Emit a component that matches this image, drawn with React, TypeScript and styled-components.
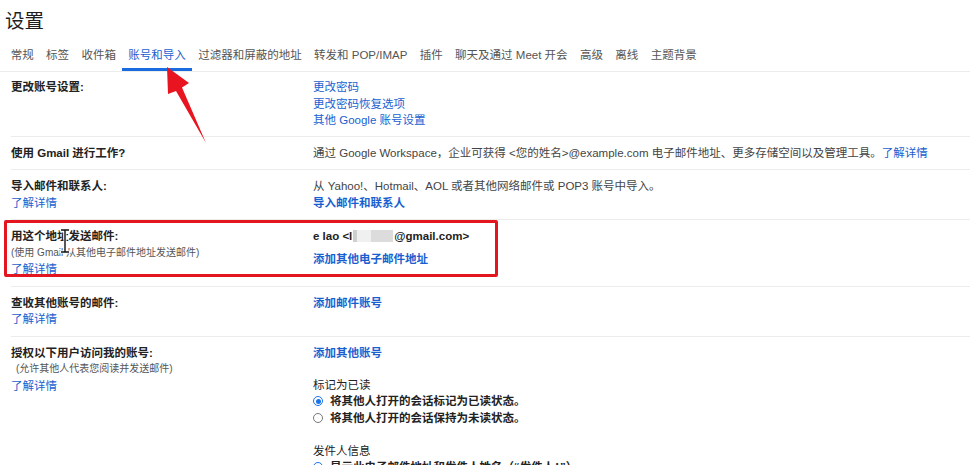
import React from "react";
import styled, { createGlobalStyle } from "styled-components";

const Global = createGlobalStyle`
  html, body { margin: 0; padding: 0; background: #fff; }
  body {
    font-family: "Liberation Sans", "Noto Sans CJK SC", sans-serif;
    overflow: hidden;
  }
`;

const Page = styled.div`
  position: relative;
  width: 970px;
  height: 465px;
  overflow: hidden;
  background: #fff;
`;

const Title = styled.h1`
  margin: 0;
  padding: 8px 0 0 5px;
  font-size: 19.5px;
  line-height: 26px;
  font-weight: 400;
  color: #1f1f1f;
`;

const TabBar = styled.nav`
  display: flex;
  padding-left: 4.5px;
  border-bottom: 1px solid #ececec;
`;

const Tab = styled.div<{ $active?: boolean }>`
  padding: 13px 6.2px 4px;
  font-size: 11.5px;
  line-height: 17px;
  white-space: nowrap;
  color: ${(p) => (p.$active ? "#1a5fd0" : "#555")};
  border-bottom: 3px solid ${(p) => (p.$active ? "#1a6ae0" : "transparent")};
`;

const Rows = styled.div`
  margin-left: 11px;
`;

const Row = styled.div<{ $pad?: number }>`
  display: grid;
  grid-template-columns: 302px 1fr;
  padding: ${(p) => p.$pad ?? 8}px 0;
  border-bottom: 1px solid #ececec;
  font-size: 11.5px;
  line-height: 16.5px;
  color: #444;
`;

const LabelCol = styled.div`
  display: flex;
  flex-direction: column;
  align-items: flex-start;
`;

const Label = styled.div`
  font-weight: 700;
  color: #222;
`;

const Note = styled.div<{ $indent?: number }>`
  font-size: 10px;
  color: #555;
  padding-left: ${(p) => p.$indent ?? 0}px;
`;

const ValueCol = styled.div`
  display: flex;
  flex-direction: column;
  align-items: flex-start;
  white-space: nowrap;
`;

const Link = styled.a<{ $bold?: boolean; $gap?: number }>`
  color: #1a5fd0;
  text-decoration: none;
  font-weight: ${(p) => (p.$bold ? 700 : 400)};
  margin-top: ${(p) => p.$gap ?? 0}px;
`;

const Strong = styled.div`
  font-weight: 700;
  color: #222;
  display: flex;
  align-items: center;
`;

const Blur = styled.span`
  display: inline-block;
  width: 40px;
  height: 12px;
  margin: 0 1px;
  background: linear-gradient(90deg, #cfcfcf 0 10%, #f0f0f0 10% 45%, #dcdcdc 45% 100%);
  filter: blur(0.6px);
`;

const SubHead = styled.div<{ $gap?: number }>`
  color: #222;
  margin-top: ${(p) => p.$gap ?? 0}px;
`;

const RadioRow = styled.div`
  display: flex;
  align-items: center;
  gap: 7px;
  font-weight: 700;
  color: #222;
`;

const Radio = styled.span<{ $checked?: boolean }>`
  box-sizing: border-box;
  width: 10px;
  height: 10px;
  border-radius: 50%;
  border: 1px solid ${(p) => (p.$checked ? "#1a73e8" : "#777")};
  display: flex;
  align-items: center;
  justify-content: center;
  &::after {
    content: "";
    width: 5px;
    height: 5px;
    border-radius: 50%;
    background: ${(p) => (p.$checked ? "#1a73e8" : "transparent")};
  }
`;

const Highlight = styled.div`
  position: absolute;
  left: 4px;
  top: 220px;
  width: 494px;
  height: 57px;
  box-sizing: border-box;
  border: 3px solid #e3161f;
  border-radius: 2px;
  pointer-events: none;
`;

const Overlay = styled.svg`
  position: absolute;
  left: 0;
  top: 0;
  pointer-events: none;
`;

const tabs = [
  "常规",
  "标签",
  "收件箱",
  "账号和导入",
  "过滤器和屏蔽的地址",
  "转发和 POP/IMAP",
  "插件",
  "聊天及通过 Meet 开会",
  "高级",
  "离线",
  "主题背景",
];

export default function App() {
  return (
    <Page>
      <Global />
      <Title>设置</Title>
      <TabBar>
        {tabs.map((t) => (
          <Tab key={t} $active={t === "账号和导入"}>
            {t}
          </Tab>
        ))}
      </TabBar>
      <Rows>
        <Row $pad={7}>
          <LabelCol>
            <Label>更改账号设置:</Label>
          </LabelCol>
          <ValueCol>
            <Link>更改密码</Link>
            <Link>更改密码恢复选项</Link>
            <Link>其他 Google 账号设置</Link>
          </ValueCol>
        </Row>
        <Row>
          <LabelCol>
            <Label>使用 Gmail 进行工作?</Label>
          </LabelCol>
          <ValueCol>
            <div>
              通过 Google Workspace，企业可获得 &lt;您的姓名&gt;@example.com 电子邮件地址、更多存储空间以及管理工具。
              <Link>了解详情</Link>
            </div>
          </ValueCol>
        </Row>
        <Row>
          <LabelCol>
            <Label>导入邮件和联系人:</Label>
            <Link>了解详情</Link>
          </LabelCol>
          <ValueCol>
            <div>从 Yahoo!、Hotmail、AOL 或者其他网络邮件或 POP3 账号中导入。</div>
            <Link $bold>导入邮件和联系人</Link>
          </ValueCol>
        </Row>
        <Row>
          <LabelCol>
            <Label>用这个地址发送邮件:</Label>
            <Note>(使用 Gmail 从其他电子邮件地址发送邮件)</Note>
            <Link>了解详情</Link>
          </LabelCol>
          <ValueCol>
            <Strong>
              e lao &lt;l<Blur />@gmail.com&gt;
            </Strong>
            <Link $bold $gap={6.5}>
              添加其他电子邮件地址
            </Link>
          </ValueCol>
        </Row>
        <Row>
          <LabelCol>
            <Label>查收其他账号的邮件:</Label>
            <Link>了解详情</Link>
          </LabelCol>
          <ValueCol>
            <Link $bold>添加邮件账号</Link>
          </ValueCol>
        </Row>
        <Row>
          <LabelCol>
            <Label>授权以下用户访问我的账号:</Label>
            <Note $indent={5}>(允许其他人代表您阅读并发送邮件)</Note>
            <Link>了解详情</Link>
          </LabelCol>
          <ValueCol>
            <Link $bold>添加其他账号</Link>
            <SubHead $gap={15.5}>标记为已读</SubHead>
            <RadioRow>
              <Radio $checked />
              将其他人打开的会话标记为已读状态。
            </RadioRow>
            <RadioRow>
              <Radio />
              将其他人打开的会话保持为未读状态。
            </RadioRow>
            <SubHead $gap={16.5}>发件人信息</SubHead>
            <RadioRow>
              <Radio $checked />
              显示此电子邮件地址和发件人姓名（“发件人：”）
            </RadioRow>
          </ValueCol>
        </Row>
      </Rows>
      <Highlight />
      <Overlay width="970" height="465" viewBox="0 0 970 465">
        <polygon
          points="167,67 189,83 182,87.5 206,143 176,91 168,94"
          fill="#e8141f"
        />
        <g stroke="#fff" strokeWidth="3" fill="none" strokeLinecap="square">
          <path d="M61 230 H69 M65 230 V252 M61 252 H69" />
        </g>
        <g stroke="#111" strokeWidth="1.4" fill="none">
          <path d="M61 230 H69 M65 230 V252 M61 252 H69" />
        </g>
      </Overlay>
    </Page>
  );
}
